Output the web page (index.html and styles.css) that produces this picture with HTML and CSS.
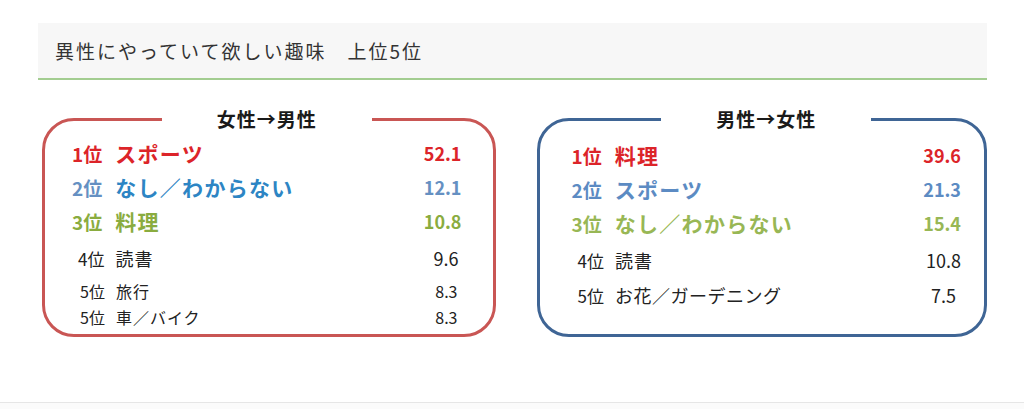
FILE: index.html
```html
<!DOCTYPE html>
<html lang="ja">
<head>
<meta charset="utf-8">
<title>異性にやっていて欲しい趣味</title>
<link rel="stylesheet" href="styles.css">
</head>
<body>
<div class="page">
  <h2 class="head">異性にやっていて欲しい趣味　上位5位</h2>
  <div class="boxes">
    <fieldset class="box box-f">
      <legend class="ttl">女性→男性</legend>
      <div class="row big red"><span class="rk">1位</span><span class="nm">スポーツ</span><span class="val">52.1</span></div>
      <div class="row big blue"><span class="rk muted">2位</span><span class="nm">なし／わからない</span><span class="val muted">12.1</span></div>
      <div class="row big green"><span class="rk">3位</span><span class="nm">料理</span><span class="val">10.8</span></div>
      <div class="row mid"><span class="rk">4位</span><span class="nm">読書</span><span class="val">9.6</span></div>
      <div class="row sm"><span class="rk">5位</span><span class="nm">旅行</span><span class="val">8.3</span></div>
      <div class="row sm"><span class="rk">5位</span><span class="nm">車／バイク</span><span class="val">8.3</span></div>
    </fieldset>
    <fieldset class="box box-m">
      <legend class="ttl">男性→女性</legend>
      <div class="row big red"><span class="rk">1位</span><span class="nm">料理</span><span class="val">39.6</span></div>
      <div class="row big blue2"><span class="rk">2位</span><span class="nm">スポーツ</span><span class="val">21.3</span></div>
      <div class="row big green2"><span class="rk">3位</span><span class="nm">なし／わからない</span><span class="val">15.4</span></div>
      <div class="row mid"><span class="rk">4位</span><span class="nm">読書</span><span class="val">10.8</span></div>
      <div class="row mid5"><span class="rk">5位</span><span class="nm">お花／ガーデニング</span><span class="val">7.5</span></div>
    </fieldset>
  </div>
</div>
<div class="foot"></div>
</body>
</html>
```

FILE: styles.css
```css
html, body {
  margin: 0;
  padding: 0;
  background: #ffffff;
}
body {
  font-family: "Noto Sans CJK JP", "Noto Sans", sans-serif;
  color: #222;
  height: 409px;
  overflow: hidden;
}
.page {
  margin: 23px 37px 0 38px;
}
.head {
  margin: 0;
  height: 57px;
  box-sizing: border-box;
  padding: 14px 0 0 17px;
  background: #f7f7f7;
  border-bottom: 2px solid #a3cd91;
  font-size: 19px;
  font-weight: 400;
  letter-spacing: 2px;
  line-height: 28px;
  color: #333;
}
.boxes {
  display: flex;
  gap: 41px;
  padding-left: 4px;
  margin-top: 27px;
}
.box {
  flex: 1 1 0;
  min-width: 0;
  margin: 0;
  border: 3px solid;
  border-radius: 32px;
  padding: 5px 31px 0 27px;
  height: 230px;
  box-sizing: border-box;
}
.box-f { border-color: #c95654; }
.box-m { border-color: #3f6595; padding: 7px 23px 0 32px; }
.ttl {
  margin: 0 auto;
  padding: 0 55px;
  font-size: 19px;
  font-weight: 700;
  line-height: 24px;
  letter-spacing: 1px;
  color: #1a1a1a;
}
.row {
  display: flex;
  align-items: center;
}
.rk { flex: none; }
.nm { flex: 1; margin-left: 13px; }
.val { flex: none; text-align: right; }
.big {
  height: 34px;
  font-weight: 700;
  font-size: 21px;
  letter-spacing: 1.3px;
}
.big .rk { font-size: 19px; letter-spacing: 0; }
.big .val { font-size: 18px; letter-spacing: 0; }
.mid {
  height: 40px;
  font-size: 18px;
  letter-spacing: 1px;
  padding: 0 3px 0 6px;
}
.mid .rk, .mid .val, .sm .rk, .sm .val, .mid5 .rk, .mid5 .val { letter-spacing: 0; }
.mid .rk { font-size: 17px; }
.mid .val { font-size: 18px; }
.mid .nm, .mid5 .nm, .sm .nm { margin-left: 11px; }
.sm {
  height: 26px;
  font-size: 16px;
  letter-spacing: 1px;
  padding: 0 4px 0 8px;
}
.sm .rk { font-size: 16px; }
.mid5 {
  height: 30px;
  font-size: 18px;
  letter-spacing: 0.5px;
  padding: 0 5px 0 6px;
}
.mid5 .rk { font-size: 17px; }
.box-m .mid { padding-right: 0; }
.red { color: #dc2429; }
.blue { color: #2d85c4; }
.blue .muted { color: #6590c2; }
.green { color: #8aac3f; }
.blue2 { color: #5c8bc3; }
.green2 { color: #98b755; }
.foot {
  margin-top: 65px;
  border-top: 1px solid #e6e6e6;
  height: 8px;
  background: #fbfbfb;
}
```
